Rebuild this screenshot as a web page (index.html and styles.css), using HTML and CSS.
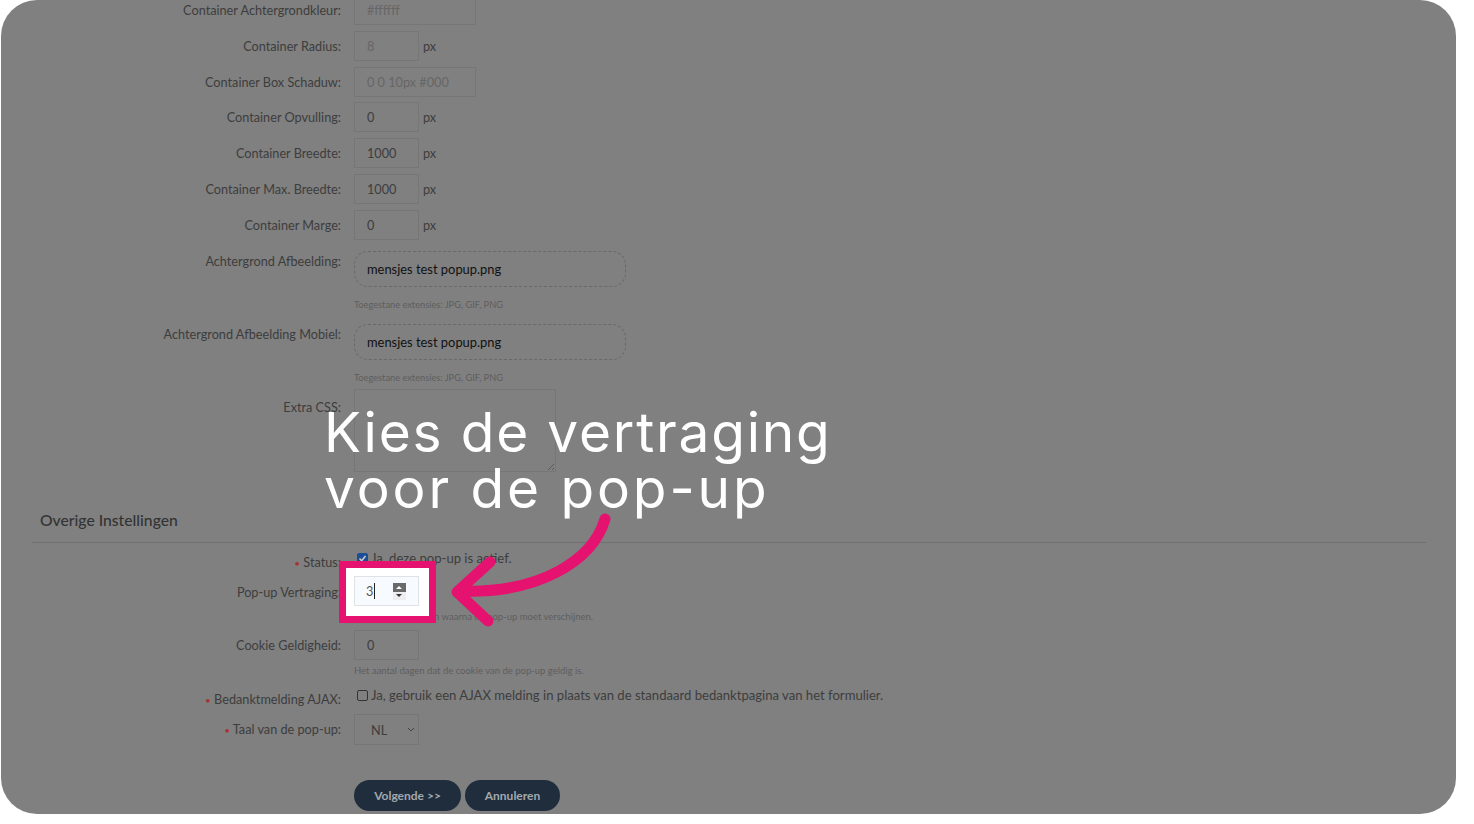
FILE: index.html
```html
<!DOCTYPE html>
<html lang="nl">
<head>
    <meta charset="UTF-8">
    <title>Pop-up instellingen</title>
    <link rel="stylesheet" href="styles.css">
</head>
<body>
    <div class="screen">
        <form class="form">
            <div class="row"><label>Container Achtergrondkleur:</label><div class="field"><span class="input wide muted">#ffffff</span></div></div>
            <div class="row"><label>Container Radius:</label><div class="field"><span class="input muted">8</span><span class="unit">px</span></div></div>
            <div class="row"><label>Container Box Schaduw:</label><div class="field"><span class="input wide muted">0 0 10px #000</span></div></div>
            <div class="row"><label>Container Opvulling:</label><div class="field"><span class="input">0</span><span class="unit">px</span></div></div>
            <div class="row"><label>Container Breedte:</label><div class="field"><span class="input">1000</span><span class="unit">px</span></div></div>
            <div class="row"><label>Container Max. Breedte:</label><div class="field"><span class="input">1000</span><span class="unit">px</span></div></div>
            <div class="row"><label>Container Marge:</label><div class="field"><span class="input">0</span><span class="unit">px</span></div></div>

            <div class="row row-file"><label>Achtergrond Afbeelding:</label><div class="field"><span class="dropzone">mensjes test popup.png</span></div></div>
            <p class="hint hint-file">Toegestane extensies: JPG, GIF, PNG</p>
            <div class="row row-file row-file-next"><label>Achtergrond Afbeelding Mobiel:</label><div class="field"><span class="dropzone">mensjes test popup.png</span></div></div>
            <p class="hint hint-file">Toegestane extensies: JPG, GIF, PNG</p>
            <div class="row row-area"><label>Extra CSS:</label><div class="field"><span class="textarea"><svg class="grip" width="8" height="8" viewBox="0 0 8 8"><path d="M1 7 7 1M5 7 7 5" stroke="#5a5a5a" fill="none"/></svg></span></div></div>

            <h2 class="section-title">Overige Instellingen</h2>

            <div class="row row-status"><label><i>•</i> Status:</label><div class="field check"><span class="box checked"><svg width="9" height="9" viewBox="0 0 9 9"><path d="M1.5 4.5 3.6 6.8 7.5 2" stroke="#c9c9c9" stroke-width="1.6" fill="none"/></svg></span><span>Ja, deze pop-up is actief.</span></div></div>
            <div class="row row-delay"><label>Pop-up Vertraging:</label><div class="field"><span class="input">3</span></div></div>
            <p class="hint hint-delay">Het aantal seconden waarna de pop-up moet verschijnen.</p>
            <div class="row"><label>Cookie Geldigheid:</label><div class="field"><span class="input">0</span></div></div>
            <p class="hint hint-cookie">Het aantal dagen dat de cookie van de pop-up geldig is.</p>
            <div class="row row-ajax"><label><i>•</i> Bedanktmelding AJAX:</label><div class="field check"><span class="box"></span><span>Ja, gebruik een AJAX melding in plaats van de standaard bedanktpagina van het formulier.</span></div></div>
            <div class="row row-lang"><label><i>•</i> Taal van de pop-up:</label><div class="field"><span class="input select">NL<svg width="8" height="5" viewBox="0 0 8 5"><path d="M1 1 4 4 7 1" stroke="#444" fill="none"/></svg></span></div></div>

            <div class="buttons">
                <span class="btn btn-next">Volgende &gt;&gt;</span>
                <span class="btn btn-cancel">Annuleren</span>
            </div>
        </form>

        <div class="caption"><span class="line-one">Kies de vertraging</span><br><span class="line-two">voor de pop-up</span></div>

        <div class="focus-box">
            <div class="focus-input">
                <span class="focus-value">3</span>
                <span class="spinner"><b class="spin-up"></b><b class="spin-down"></b></span>
            </div>
        </div>

        <svg class="arrow" width="200" height="130" viewBox="0 0 200 130">
            <path d="M155 6C143 47 90 81 10 78M40 49 7 79 38 108" fill="none" stroke="#e5126f" stroke-width="11" stroke-linecap="round" stroke-linejoin="round"/>
        </svg>
    </div>
</body>
</html>
```

FILE: styles.css
```css
* {
    box-sizing: border-box;
}

body {
    margin: 0;
    padding-left: 1px;
    background: #fff;
    font-family: "Lato", "Noto Sans", sans-serif;
    color: #3d3d3d;
    overflow: hidden;
}

.screen {
    position: relative;
    width: 1455px;
    height: 814px;
    background: #808080;
    border-radius: 36px;
    overflow: hidden;
}

.form {
    margin-top: -5px;
    font-size: 12.7px;
}

.row {
    display: grid;
    grid-template-columns: 340px 1fr;
    column-gap: 13px;
    margin-bottom: 5.75px;
}

.row label {
    height: 30px;
    text-align: right;
    line-height: 30px;
    white-space: nowrap;
}

.row label i {
    color: #a83232;
    font-style: normal;
    font-size: 10px;
}

.field {
    display: flex;
    align-items: center;
}

.input {
    display: block;
    width: 65px;
    height: 30px;
    padding-left: 12px;
    line-height: 28px;
    border: 1px solid #767676;
}

.wide {
    width: 122px;
}

.muted {
    color: #666;
}

.unit {
    margin-left: 4px;
}

.row-file {
    margin-top: 11.5px;
    margin-bottom: 0;
}

.row-file-next {
    margin-top: 13px;
}

.form > .row-file label {
    line-height: 20px;
}

.dropzone {
    display: block;
    width: 272px;
    height: 36px;
    padding-left: 12px;
    line-height: 35px;
    font-size: 12.9px;
    color: #111;
    border: 1px dashed #696969;
    border-radius: 14px;
}

.hint {
    margin: 0 0 0 353px;
    font-size: 9.5px;
    line-height: 12px;
    color: #5e5e5e;
}

.hint-file {
    margin-top: 12px;
    font-size: 9.25px;
}

.row-area {
    margin-top: 5px;
    margin-bottom: 0;
}

.row-area label {
    line-height: 36px;
}

.textarea {
    position: relative;
    display: block;
    width: 202px;
    height: 83px;
    border: 1px solid #767676;
}

.grip {
    position: absolute;
    right: 0;
    bottom: 0;
}

.section-title {
    margin: 38px 0 0 39px;
    font-size: 15.7px;
    line-height: 20px;
    font-weight: 500;
    color: #333;
}

.section-title::after {
    content: "";
    display: block;
    margin: 12px 30px 0 -8px;
    border-bottom: 1px solid #707070;
}

.row-status {
    height: 20px;
    margin-top: 5px;
    margin-bottom: 0;
}

.row-status label,
.row-ajax label {
    line-height: 28px;
}

.check {
    gap: 3px;
    height: 20px;
    font-size: 13.1px;
}

.box {
    flex: none;
    display: flex;
    align-items: center;
    justify-content: center;
    width: 11px;
    height: 11px;
    margin-left: 3px;
    border: 1px solid #333;
    border-radius: 2px;
}

.checked {
    background: #1a4f96;
    border-color: #1a4f96;
}

.row-delay {
    margin-top: 9px;
    margin-bottom: 0;
}

.hint-delay {
    margin-top: 4px;
    margin-bottom: 7px;
}

.hint-cookie {
    margin-top: -0.75px;
    margin-bottom: 8px;
}

.row-ajax {
    height: 20px;
    margin-bottom: 9px;
}

.row-lang .select {
    display: flex;
    justify-content: space-between;
    align-items: center;
    height: 31px;
    padding: 0 3px 0 16px;
}

.buttons {
    display: flex;
    gap: 4px;
    margin: 35px 0 0 353px;
}

.btn {
    display: block;
    height: 31px;
    border-radius: 16px;
    background: #1f2d3d;
    color: #a3a8ad;
    font-size: 12px;
    font-weight: 700;
    line-height: 31px;
    text-align: center;
}

.btn-next {
    width: 107px;
}

.btn-cancel {
    width: 95px;
}

.caption {
    position: absolute;
    left: 323px;
    top: 404px;
    font-family: "Inter", sans-serif;
    font-weight: 400;
    font-size: 55px;
    line-height: 56px;
    color: #fff;
    white-space: nowrap;
}

.line-one {
    letter-spacing: 1.8px;
}

.line-two {
    letter-spacing: 2.9px;
}

.focus-box {
    position: absolute;
    left: 338px;
    top: 561px;
    width: 97px;
    height: 62px;
    padding: 8px 0 0 8px;
    background: #fff;
    border: 7px solid #e5126f;
}

.focus-input {
    position: relative;
    width: 65px;
    height: 30px;
    background: #f7fbff;
    border: 1px solid #dfe3e6;
    font-size: 12.7px;
    line-height: 29px;
    color: #555;
}

.focus-value {
    margin-left: 11px;
    padding-right: 1px;
    border-right: 1px solid #222;
}

.spinner {
    position: absolute;
    left: 38px;
    top: 6px;
    width: 13px;
    height: 16px;
}

.spin-up {
    display: block;
    height: 9px;
    background: #6a6a6a;
    position: relative;
}

.spin-up::after {
    content: "";
    position: absolute;
    left: 3px;
    top: 3px;
    border: 3.5px solid transparent;
    border-top: 0;
    border-bottom: 3px solid #fff;
}

.spin-down {
    display: block;
    height: 8px;
    background: #eceeef;
    position: relative;
}

.spin-down::after {
    content: "";
    position: absolute;
    left: 3px;
    top: 2px;
    border: 3.5px solid transparent;
    border-bottom: 0;
    border-top: 3px solid #333;
}

.arrow {
    position: absolute;
    left: 449px;
    top: 513px;
}
```
